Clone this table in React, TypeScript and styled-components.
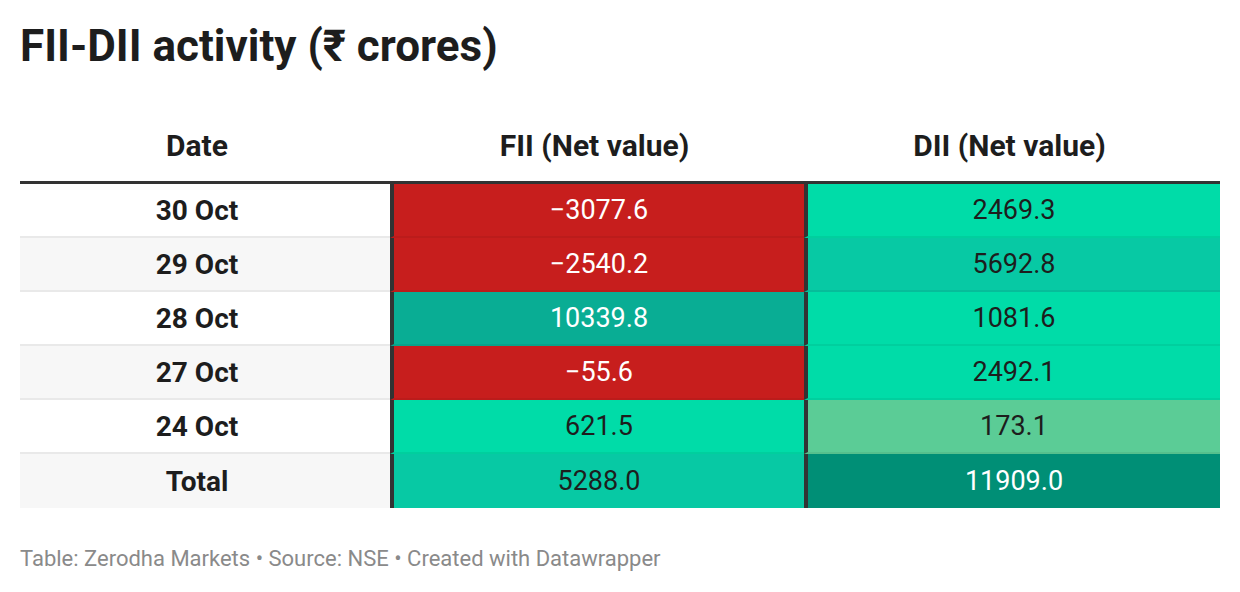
import { Fragment } from 'react'
import styled, { createGlobalStyle } from 'styled-components'

const GlobalStyle = createGlobalStyle`
  html, body { margin: 0; padding: 0; background: #fff; }
  body { font-family: Roboto, "Liberation Sans", Arial, sans-serif; color: #1d1d1d; }
`

const Page = styled.div`
  width: 1240px;
  padding: 20px 20px 0;
  box-sizing: border-box;
`

const Title = styled.h1`
  margin: 0;
  font-size: 44px;
  line-height: 52px;
  font-weight: 700;
  color: #1d1d1d;
`

const Table = styled.div`
  margin-top: 38px;
  display: grid;
  grid-template-columns: 370px 414px 416px;
`

const Head = styled.div<{ $pr?: number }>`
  height: 71px;
  display: flex;
  align-items: center;
  justify-content: center;
  padding-right: ${({ $pr }) => $pr ?? 5}px;
  font-size: 30px;
  font-weight: 700;
  border-bottom: 3px solid #333;
`

const Cell = styled.div<{ $bg: string; $light?: boolean; $sep?: boolean }>`
  height: 54px;
  box-sizing: border-box;
  display: flex;
  align-items: center;
  justify-content: center;
  font-size: 27px;
  background: ${({ $bg }) => $bg};
  color: ${({ $light }) => ($light ? '#fff' : '#1d1d1d')};
  border-bottom: 2px solid rgba(0, 0, 0, 0.06);
  border-left: ${({ $sep }) => ($sep ? '4px solid #333' : 'none')};
  &:nth-last-child(-n + 3) { border-bottom: none; }
`

const DateCell = styled(Cell)`
  font-size: 28px;
  font-weight: 700;
  padding-right: 16px;
  border-bottom-color: #e9e9e9;
`

const Footer = styled.p`
  margin: 38px 0 0;
  font-size: 22px;
  line-height: 26px;
  color: #8a8a8a;
`

type Row = {
  date: string
  fii: string
  fiiBg: string
  fiiLight?: boolean
  dii: string
  diiBg: string
  diiLight?: boolean
}

const RED = '#c71e1d'
const GREEN = '#00dca8'
const MID = '#07c9a4'

const rows: Row[] = [
  { date: '30 Oct', fii: '−3077.6', fiiBg: RED, fiiLight: true, dii: '2469.3', diiBg: GREEN },
  { date: '29 Oct', fii: '−2540.2', fiiBg: RED, fiiLight: true, dii: '5692.8', diiBg: MID },
  { date: '28 Oct', fii: '10339.8', fiiBg: '#09ad94', fiiLight: true, dii: '1081.6', diiBg: GREEN },
  { date: '27 Oct', fii: '−55.6', fiiBg: RED, fiiLight: true, dii: '2492.1', diiBg: GREEN },
  { date: '24 Oct', fii: '621.5', fiiBg: GREEN, dii: '173.1', diiBg: '#5bcc96' },
  { date: 'Total', fii: '5288.0', fiiBg: MID, dii: '11909.0', diiBg: '#008f76', diiLight: true },
]

export default function App() {
  return (
    <Page>
      <GlobalStyle />
      <Title>FII-DII activity (₹ crores)</Title>
      <Table>
        <Head $pr={16}>Date</Head>
        <Head>FII (Net value)</Head>
        <Head>DII (Net value)</Head>
        {rows.map((r, i) => (
          <Fragment key={r.date}>
            <DateCell $bg={i % 2 ? '#f7f7f7' : '#fff'}>{r.date}</DateCell>
            <Cell $bg={r.fiiBg} $light={r.fiiLight} $sep>{r.fii}</Cell>
            <Cell $bg={r.diiBg} $light={r.diiLight} $sep>{r.dii}</Cell>
          </Fragment>
        ))}
      </Table>
      <Footer>Table: Zerodha Markets • Source: NSE • Created with Datawrapper</Footer>
    </Page>
  )
}
